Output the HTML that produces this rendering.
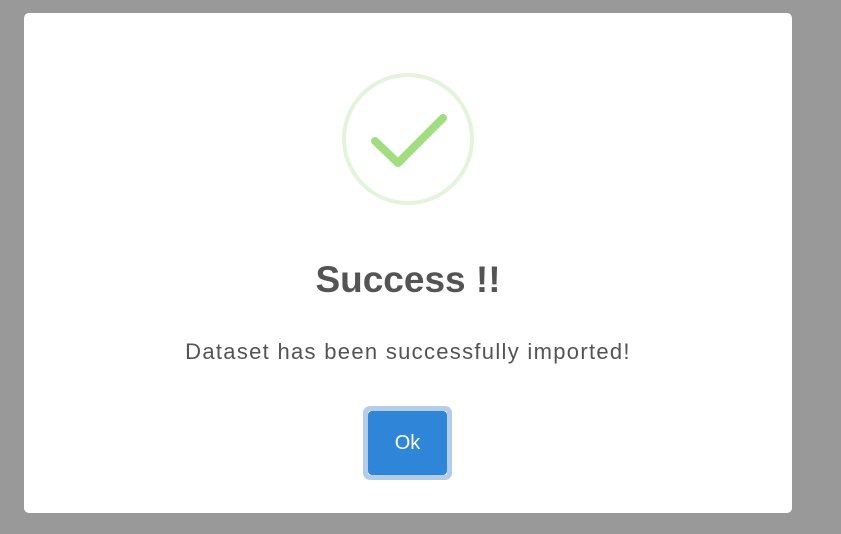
<!DOCTYPE html>
<html><head><style>
html,body{margin:0;padding:0;width:841px;height:534px;background:#999;overflow:hidden;font-family:"Liberation Sans",sans-serif}
.m{position:absolute;left:24px;top:13px;width:768px;height:500px;background:#fff;border-radius:5px}
svg{position:absolute;left:0;top:0}
.t{position:absolute;left:0;width:816px;text-align:center;color:#545454}
.b{position:absolute;left:363px;top:406px;width:79px;height:64px;border:5px solid #b4cde8;border-radius:7px}
.b div{width:79px;height:64px;background:#2f86d8;border-radius:4px;color:#fff;font-size:20px;line-height:64px;text-align:center}
</style></head><body>
<div class="m"></div>
<svg width="841" height="534">
<circle cx="408" cy="139" r="64" fill="none" stroke="#e3f4da" stroke-width="4"/>
<polyline points="375,141 398,163 443,118" fill="none" stroke="#a2dd81" stroke-width="8" stroke-linecap="round" stroke-linejoin="round"/>
</svg>
<div class="t" style="top:256px;font-size:37px;font-weight:bold;line-height:48px">Success !!</div>
<div class="t" style="top:337px;font-size:22px;letter-spacing:1.3px;line-height:30px">Dataset has been successfully imported!</div>
<div class="b"><div>Ok</div></div>
</body></html>
